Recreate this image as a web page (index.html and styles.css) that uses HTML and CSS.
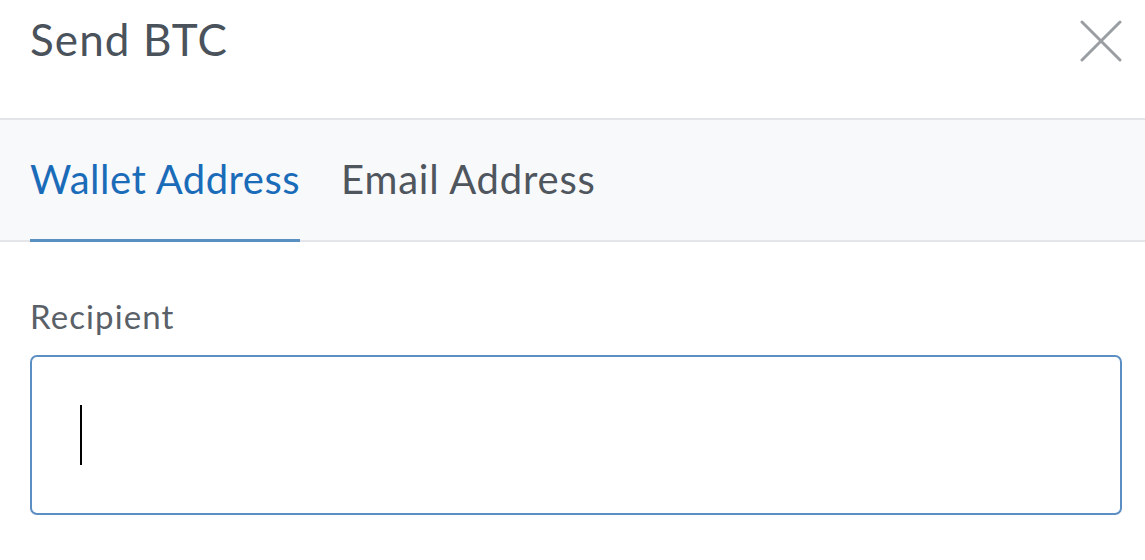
FILE: index.html
```html
<!DOCTYPE html>
<html>
<head>
<meta charset="utf-8">
<link rel="stylesheet" href="styles.css">
</head>
<body>
<div class="modal">
  <header class="header">
    <h1 class="title">Send BTC</h1>
    <button class="close" aria-label="Close">
      <svg width="42" height="42" viewBox="0 0 42 42"><path d="M2 2 L40 40 M40 2 L2 40" stroke="#9a9ea3" stroke-width="3" stroke-linecap="round" fill="none"/></svg>
    </button>
  </header>
  <nav class="tabs">
    <div class="tab active">Wallet Address</div>
    <div class="tab">Email Address</div>
  </nav>
  <section class="form">
    <label class="label">Recipient</label>
    <div class="input"><span class="caret"></span></div>
  </section>
</div>
</body>
</html>
```
FILE: styles.css
```css
* { box-sizing: border-box; }
html, body { margin: 0; padding: 0; background: #fff; }
body { font-family: "Lato", "Open Sans", sans-serif; width: 1145px; height: 560px; overflow: hidden; }
.modal { display: flex; flex-direction: column; }
.header {
  height: 118px;
  display: flex;
  align-items: flex-start;
  justify-content: space-between;
  padding: 0 23px 0 30px;
}
.title {
  margin: 13px 0 0 0;
  font-size: 44px;
  font-weight: 400;
  color: #4a525b;
  letter-spacing: 1.1px;
}
.close {
  margin-top: 20px;
  border: 0;
  background: none;
  padding: 0;
  width: 42px;
  height: 42px;
}
.tabs {
  border-top: 2px solid #e2e4e7;
  border-bottom: 2px solid #e3e5e8;
  background: #f8f9fb;
  height: 124px;
  display: flex;
  gap: 41px;
  padding: 0 0 0 30px;
}
.tab {
  font-size: 40px;
  color: #4f565e;
  line-height: 1;
  padding-top: 39px;
  letter-spacing: 0.5px;
}
.tab + .tab { letter-spacing: 0.8px; }
.tab.active {
  color: #1a6cb9;
  border-bottom: 3px solid #5a8fc2;
  margin-bottom: -2px;
}
.form { padding: 56px 23px 0 30px; display: flex; flex-direction: column; }
.label {
  font-size: 33px;
  color: #5a6068;
  line-height: 1;
  letter-spacing: 1.1px;
  padding-top: 2px;
}
.input {
  margin-top: 22px;
  height: 160px;
  border: 2px solid #5b8fc3;
  border-radius: 7px;
  padding: 48px 0 0 48px;
}
.caret { display: block; width: 2px; height: 60px; background: #000; }
```
